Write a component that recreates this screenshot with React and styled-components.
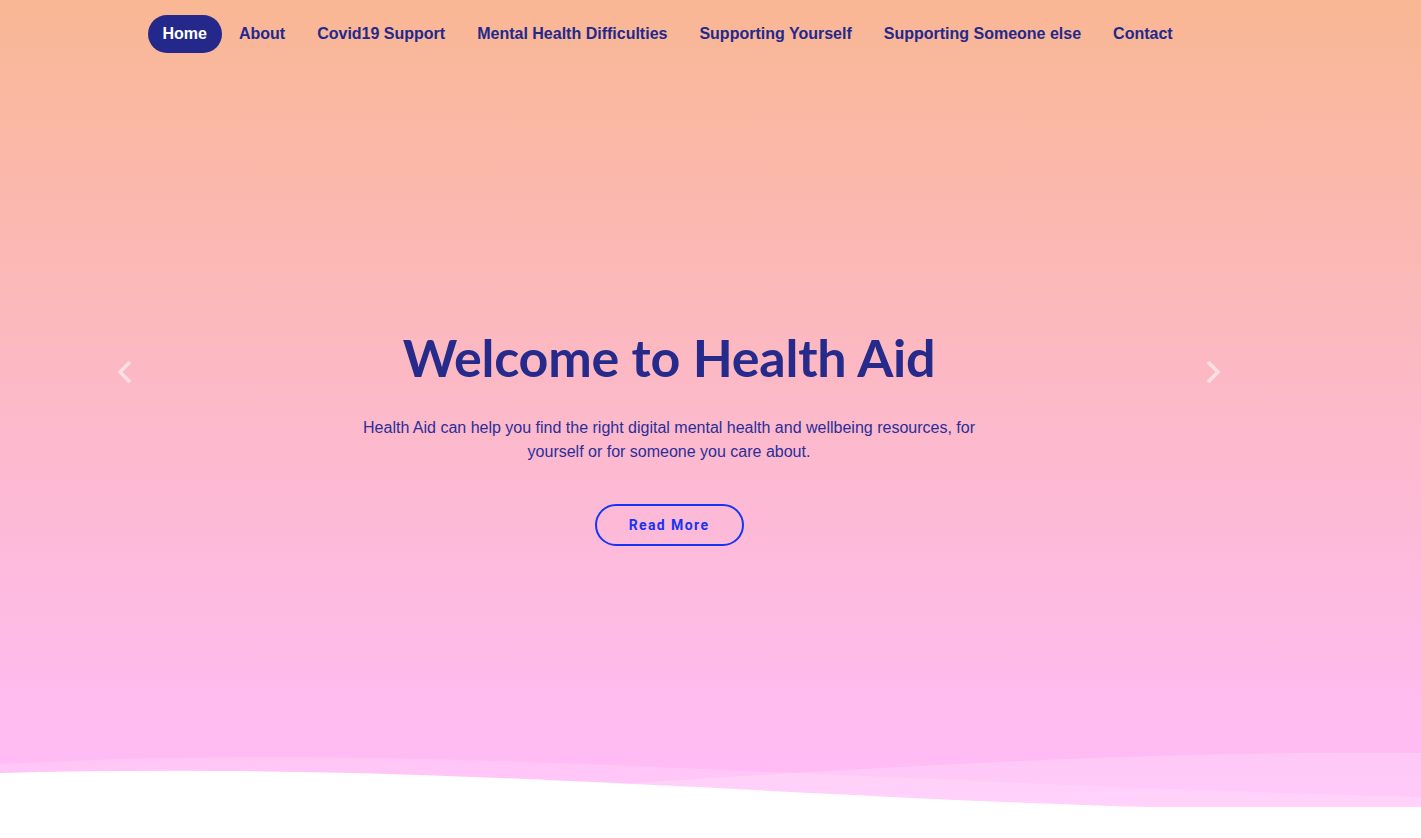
import styled, { createGlobalStyle } from "styled-components";

const GlobalStyle = createGlobalStyle`
  * { box-sizing: border-box; }
  html, body { margin: 0; padding: 0; background: #fff; }
  body { font-family: "Liberation Sans", Arial, sans-serif; }
`;

const links = [
  "Home",
  "About",
  "Covid19 Support",
  "Mental Health Difficulties",
  "Supporting Yourself",
  "Supporting Someone else",
  "Contact",
];

const Page = styled.div`
  min-height: 838px;
  background: #fff;
`;

const Hero = styled.header`
  height: 807px;
  display: flex;
  flex-direction: column;
  background: linear-gradient(180deg, #f9b794 0%, #fcb9c8 50%, #ffbcfa 100%);
`;

const NavBar = styled.nav`
  height: 66px;
  width: 1140px;
  margin: 0 auto;
  padding: 1px 7px 0;
  display: flex;
  align-items: center;
`;

const NavList = styled.ul`
  list-style: none;
  margin: 0;
  padding: 0;
  display: flex;
  align-items: center;
  gap: 2px;
`;

const NavLink = styled.a`
  display: flex;
  align-items: center;
  height: 38px;
  padding: 0 15px;
  border-radius: 19px;
  font-family: "Liberation Sans", Arial, sans-serif;
  font-size: 16px;
  font-weight: 700;
  text-decoration: none;
  cursor: pointer;
  color: ${({ $active }) => ($active ? "#fff" : "#24288a")};
  background: ${({ $active }) => ($active ? "#24288a" : "transparent")};
`;

const Slide = styled.section`
  height: 612px;
  width: 1340px;
  padding: 0 118px 0 116px;
  display: flex;
  align-items: center;
  justify-content: space-between;
`;

const Arrow = styled.button`
  width: 20px;
  height: 28px;
  padding: 0;
  border: 0;
  background: none;
  cursor: pointer;
  display: flex;

  svg { display: block; }
`;

const Content = styled.div`
  flex: 1;
  margin-top: 124px;
  display: flex;
  flex-direction: column;
  align-items: center;
  text-align: center;
`;

const Title = styled.h1`
  margin: 4px 0 27px;
  font-family: Lato, "Open Sans", sans-serif;
  font-size: 52px;
  line-height: 1.2;
  font-weight: 700;
  letter-spacing: -0.2px;
  color: #262a8a;
`;

const Lead = styled.p`
  margin: 0 0 40px;
  max-width: 640px;
  font-family: "Liberation Sans", Arial, sans-serif;
  font-size: 16px;
  line-height: 24px;
  color: #2a2e98;
`;

const ReadMore = styled.a`
  display: flex;
  align-items: center;
  justify-content: center;
  width: 149px;
  height: 42px;
  border: 2px solid #1634f5;
  border-radius: 21px;
  font-family: Roboto, "Liberation Sans", sans-serif;
  font-size: 14px;
  font-weight: 700;
  letter-spacing: 1.4px;
  color: #1634f5;
  text-decoration: none;
  cursor: pointer;
`;

const Waves = styled.svg`
  display: block;
  width: 100%;
  height: 57px;
  margin-top: auto;
`;

const Chevron = ({ dir }) => (
  <svg width="20" height="28" viewBox="0 0 20 28">
    <path
      d={dir === "left" ? "M14 4 L4 14 L14 24" : "M6 4 L16 14 L6 24"}
      fill="none"
      stroke="rgba(255,255,255,0.55)"
      strokeWidth="3.6"
    />
  </svg>
);

export default function App() {
  return (
    <Page>
      <GlobalStyle />
      <Hero>
        <NavBar>
          <NavList>
            {links.map((l, i) => (
              <li key={l}>
                <NavLink $active={i === 0}>{l}</NavLink>
              </li>
            ))}
          </NavList>
        </NavBar>
        <Slide>
          <Arrow aria-label="Previous">
            <Chevron dir="left" />
          </Arrow>
          <Content>
            <Title>Welcome to Health Aid</Title>
            <Lead>
              Health Aid can help you find the right digital mental health and
              wellbeing resources, for yourself or for someone you care about.
            </Lead>
            <ReadMore>Read More</ReadMore>
          </Content>
          <Arrow aria-label="Next">
            <Chevron dir="right" />
          </Arrow>
        </Slide>
        <Waves viewBox="0 0 1421 57" preserveAspectRatio="none">
          <path
            d="M0 14 C150 6 300 5 500 11 C700 17 1000 35 1421 47 V57 H0 Z"
            fill="rgba(255,255,255,0.15)"
          />
          <path
            d="M1421 3 C1250 2 1100 6 900 17 C750 25 550 38 300 57 H1421 Z"
            fill="rgba(255,255,255,0.2)"
          />
          <path
            d="M0 23 C150 19 300 20 500 28 C700 36 950 52 1150 57 H0 Z"
            fill="#fff"
          />
        </Waves>
      </Hero>
    </Page>
  );
}
